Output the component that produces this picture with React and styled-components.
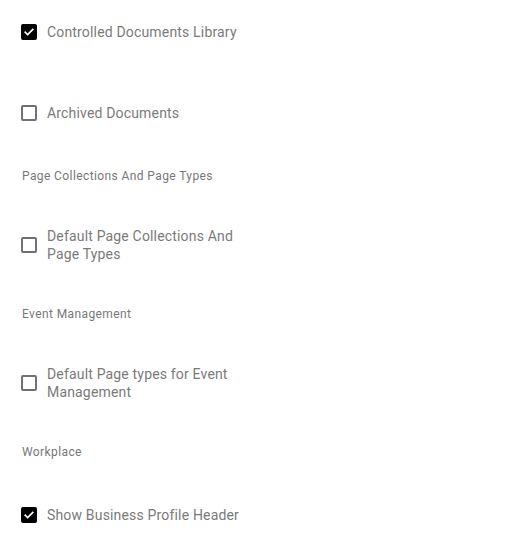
import React, { useState } from 'react';
import styled, { createGlobalStyle } from 'styled-components';

const GlobalStyle = createGlobalStyle`
  body {
    margin: 0;
    background: #ffffff;
    font-family: Roboto, "Liberation Sans", Arial, sans-serif;
  }
`;

const initial = {
  controlled: true,
  archived: false,
  pageCollections: false,
  eventTypes: false,
  businessHeader: true,
};

function CheckItem({ checked, label, onToggle, space }) {
  return (
    <Row space={space} onClick={onToggle}>
      <Box checked={checked}>
        {checked && (
          <svg width="14" height="14" viewBox="0 0 24 24">
            <path
              d="M4.5 12.5l4.8 4.8L19.5 7"
              fill="none"
              stroke="#fff"
              strokeWidth="3.4"
              strokeLinecap="square"
            />
          </svg>
        )}
      </Box>
      <Label>{label}</Label>
    </Row>
  );
}

export default function App() {
  const [values, setValues] = useState(initial);
  const toggle = (key) => () => setValues((prev) => ({ ...prev, [key]: !prev[key] }));

  return (
    <Page>
      <GlobalStyle />
      <CheckItem space={0} checked={values.controlled} label="Controlled Documents Library" onToggle={toggle('controlled')} />
      <CheckItem space={41} checked={values.archived} label="Archived Documents" onToggle={toggle('archived')} />

      <SectionTitle>Page Collections And Page Types</SectionTitle>
      <CheckItem checked={values.pageCollections} label="Default Page Collections And Page Types" onToggle={toggle('pageCollections')} />

      <SectionTitle>Event Management</SectionTitle>
      <CheckItem checked={values.eventTypes} label="Default Page types for Event Management" onToggle={toggle('eventTypes')} />

      <SectionTitle>Workplace</SectionTitle>
      <CheckItem checked={values.businessHeader} label="Show Business Profile Header" onToggle={toggle('businessHeader')} />
    </Page>
  );
}

const Page = styled.div`
  display: flex;
  flex-direction: column;
  align-items: flex-start;
  padding: 12px 0 0 21px;
  width: 528px;
  box-sizing: border-box;
`;

const Row = styled.div`
  display: flex;
  align-items: center;
  gap: 10px;
  min-height: 40px;
  padding: 8px 0;
  box-sizing: border-box;
  margin-top: ${({ space }) => (space === undefined ? 35 : space)}px;
  cursor: pointer;
`;

const Box = styled.span`
  flex: none;
  width: 16px;
  height: 16px;
  box-sizing: border-box;
  border-radius: 2px;
  border: 2px solid ${({ checked }) => (checked ? '#000' : '#717171')};
  background: ${({ checked }) => (checked ? '#000' : 'transparent')};
  display: flex;
  align-items: center;
  justify-content: center;
`;

const Label = styled.span`
  width: 205px;
  font-size: 14px;
  line-height: 18px;
  color: #7a7a7a;
  letter-spacing: 0.17px;
`;

const SectionTitle = styled.div`
  margin-top: 35px;
  padding-left: 1px;
  font-size: 12px;
  line-height: 16px;
  color: #777777;
  letter-spacing: 0.4px;
`;
